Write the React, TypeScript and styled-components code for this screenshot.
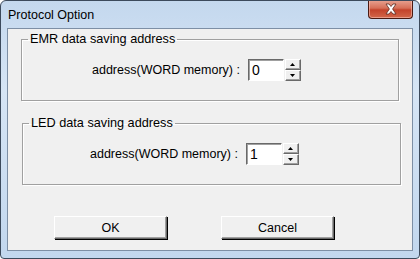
import * as React from 'react';
import styled, { createGlobalStyle } from 'styled-components';

const GlobalStyle = createGlobalStyle`
  html, body {
    margin: 0;
    padding: 0;
    background: #ffffff;
  }
  body {
    font-family: "Liberation Sans", Arial, sans-serif;
    font-size: 12.5px;
    color: #000;
  }
`;

const Window = styled.div`
  width: 420px;
  height: 259px;
  box-sizing: border-box;
  border: 1px solid #3c4a5c;
  border-radius: 6px 6px 4px 4px;
  background: linear-gradient(180deg, #c4d8ee 0%, #d6e5f5 35%, #c2d7ee 100%);
  display: flex;
  flex-direction: column;
  overflow: hidden;
`;

const TitleBar = styled.div`
  height: 27px;
  display: flex;
  align-items: flex-start;
  justify-content: space-between;
  padding-left: 7px;
`;

const Title = styled.div`
  margin-top: 7px;
  font-size: 12.5px;
  color: #000;
`;

const CloseButton = styled.div`
  width: 45px;
  height: 19px;
  margin-right: 6px;
  margin-top: -1px;
  box-sizing: border-box;
  border: 1px solid #4a1a12;
  border-top: none;
  border-radius: 0 0 4px 4px;
  background: linear-gradient(180deg, #e8a493 0%, #d66f58 45%, #c3432b 55%, #d2674a 100%);
  box-shadow: inset 0 0 0 1px rgba(255, 210, 200, 0.5);
  display: flex;
  align-items: center;
  justify-content: center;
`;

const Client = styled.div`
  flex: 1;
  margin: 0 6px 7px 6px;
  border: 1px solid #7d8fa5;
  background: #f0f0f0;
  padding: 3px 0 0 13px;
  display: flex;
  flex-direction: column;
`;

const Group = styled.fieldset<{ $width: number; $shift: number }>`
  width: ${(p) => p.$width}px;
  height: 69px;
  box-sizing: border-box;
  margin: 0 0 0 ${(p) => p.$shift}px;
  padding: 13px 0 0 0;
  border: 1px solid #a0a0a0;
  box-shadow: 1px 1px 0 #ffffff, inset 1px 1px 0 #ffffff;
`;

const Legend = styled.legend`
  margin-left: 6px;
  padding: 0 2px;
  font-size: 12.7px;
  line-height: 14px;
`;

const Row = styled.div<{ $indent: number }>`
  display: flex;
  align-items: center;
  padding-left: ${(p) => p.$indent}px;
`;

const FieldLabel = styled.span`
  font-size: 12.5px;
  margin-right: 8px;
`;

const NumberBox = styled.div`
  width: 36px;
  height: 22px;
  box-sizing: border-box;
  background: #fff;
  border-style: solid;
  border-width: 1px;
  border-color: #696969 #ffffff #ffffff #696969;
  box-shadow: inset 1px 1px 0 #a0a0a0;
  padding: 1px 0 0 3px;
  font-size: 14px;
  line-height: 18px;
`;

const Spin = styled.div`
  width: 16px;
  height: 22px;
  margin-left: 1px;
  display: flex;
  flex-direction: column;
`;

const SpinButton = styled.div`
  flex: 1;
  box-sizing: border-box;
  background: #f0f0f0;
  border-style: solid;
  border-width: 1px;
  border-color: #ffffff #696969 #696969 #ffffff;
  box-shadow: inset -1px -1px 0 #a0a0a0;
  display: flex;
  align-items: center;
  justify-content: center;
`;

const Spacer = styled.div<{ $h: number }>`
  height: ${(p) => p.$h}px;
  flex: none;
`;

const ButtonRow = styled.div`
  display: flex;
  gap: 54px;
  padding-left: 33px;
`;

const PushButton = styled.button`
  width: 113px;
  height: 23px;
  box-sizing: border-box;
  background: #f0f0f0;
  border-style: solid;
  border-width: 1px;
  border-color: #ffffff #696969 #696969 #ffffff;
  box-shadow: inset -1px -1px 0 #a0a0a0, 1px 1px 0 #000;
  font-family: "Liberation Sans", Arial, sans-serif;
  font-size: 12.5px;
  color: #000;
  padding: 0;
`;

function Arrow({ up }: { up: boolean }) {
  return (
    <svg width="5" height="3" viewBox="0 0 5 3">
      <path d={up ? 'M2.5 0 L5 3 L0 3 Z' : 'M0 0 L5 0 L2.5 3 Z'} fill="#000" />
    </svg>
  );
}

function Field({ value, indent }: { value: string; indent: number }) {
  return (
    <Row $indent={indent}>
      <FieldLabel>address(WORD memory) :</FieldLabel>
      <NumberBox>{value}</NumberBox>
      <Spin>
        <SpinButton>
          <Arrow up />
        </SpinButton>
        <SpinButton>
          <Arrow up={false} />
        </SpinButton>
      </Spin>
    </Row>
  );
}

export default function App() {
  return (
    <>
      <GlobalStyle />
      <Window>
        <TitleBar>
          <Title>Protocol Option</Title>
          <CloseButton>
            <svg width="14" height="12" viewBox="0 0 14 12">
              <path
                d="M2 1 L5 1 L7 3.5 L9 1 L12 1 L8.6 6 L12 11 L9 11 L7 8.5 L5 11 L2 11 L5.4 6 Z"
                fill="#ffffff"
                stroke="#5a2a20"
                strokeWidth="0.8"
              />
            </svg>
          </CloseButton>
        </TitleBar>
        <Client>
          <Group $width={378} $shift={0}>
            <Legend>EMR data saving address</Legend>
            <Field value="0" indent={70} />
          </Group>
          <Spacer $h={15} />
          <Group $width={379} $shift={1}>
            <Legend>LED data saving address</Legend>
            <Field value="1" indent={67} />
          </Group>
          <Spacer $h={31} />
          <ButtonRow>
            <PushButton>OK</PushButton>
            <PushButton>Cancel</PushButton>
          </ButtonRow>
        </Client>
      </Window>
    </>
  );
}
